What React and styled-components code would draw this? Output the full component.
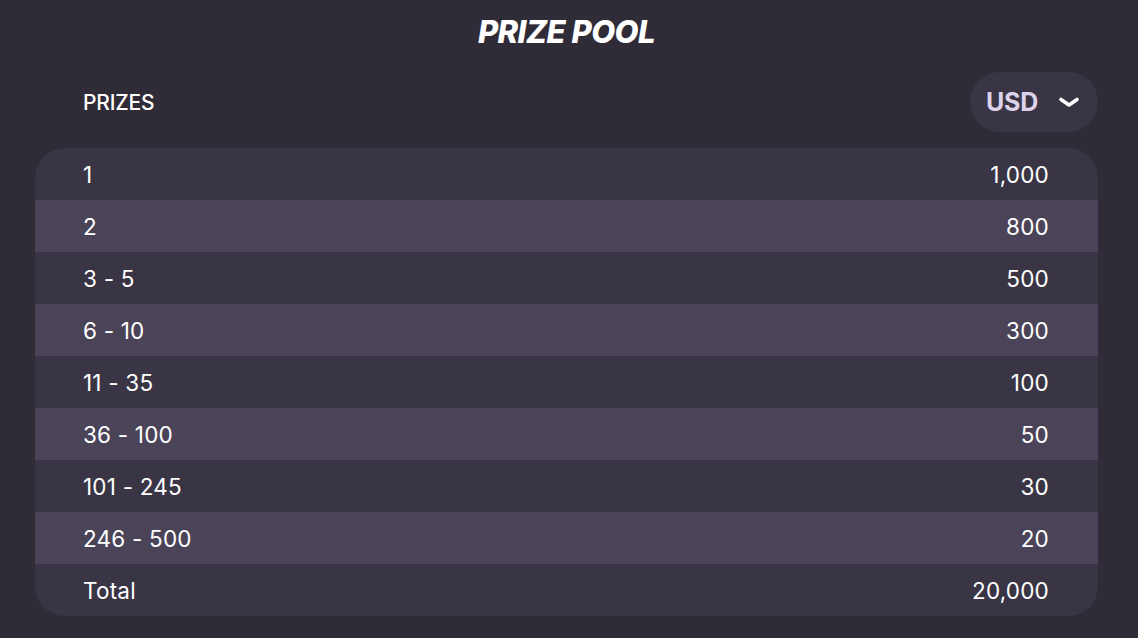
import styled, { createGlobalStyle } from "styled-components";

const prizes = [
  { place: "1", amount: "1,000" },
  { place: "2", amount: "800" },
  { place: "3 - 5", amount: "500" },
  { place: "6 - 10", amount: "300" },
  { place: "11 - 35", amount: "100" },
  { place: "36 - 100", amount: "50" },
  { place: "101 - 245", amount: "30" },
  { place: "246 - 500", amount: "20" },
  { place: "Total", amount: "20,000" },
];

export default function App() {
  return (
    <Page>
      <GlobalStyle />
      <Title>PRIZE POOL</Title>
      <Header>
        <Label>PRIZES</Label>
        <CurrencyButton>
          USD
          <svg width="22" height="12" viewBox="0 0 22 12" fill="none">
            <path
              d="M3 3.5l8 5.5 8-5.5"
              stroke="#fff"
              strokeWidth="3.6"
              strokeLinecap="round"
              strokeLinejoin="round"
            />
          </svg>
        </CurrencyButton>
      </Header>
      <Table>
        {prizes.map((p, i) => (
          <Row key={p.place} $alt={i % 2 === 1}>
            <span>{p.place}</span>
            <span>{p.amount}</span>
          </Row>
        ))}
      </Table>
    </Page>
  );
}

const GlobalStyle = createGlobalStyle`
  body {
    margin: 0;
    background: #2f2b37;
    font-family: "Inter", "Noto Sans", sans-serif;
    color: #fff;
  }
`;

const Page = styled.div`
  width: 1138px;
  height: 638px;
  box-sizing: border-box;
  padding: 14px 40px 0 35px;
  display: flex;
  flex-direction: column;
`;

const Title = styled.h1`
  margin: 0;
  text-align: center;
  font-size: 31px;
  line-height: 36px;
  font-weight: 800;
  font-style: italic;
  letter-spacing: -0.5px;
`;

const Header = styled.div`
  margin-top: 22px;
  height: 60px;
  display: flex;
  align-items: center;
  justify-content: space-between;
  padding-left: 48px;
`;

const Label = styled.div`
  font-size: 21px;
  font-weight: 500;
  letter-spacing: -0.2px;
`;

const CurrencyButton = styled.div`
  height: 60px;
  width: 128px;
  box-sizing: border-box;
  padding: 0 18px 0 16px;
  border-radius: 30px;
  background: #3a3545;
  display: flex;
  align-items: center;
  justify-content: space-between;
  color: #dcd3ea;
  font-size: 25px;
  font-weight: 700;
  letter-spacing: -0.2px;
  svg {
    margin-top: 0;
  }
`;

const Table = styled.div`
  margin-top: 16px;
  border-radius: 30px;
  overflow: hidden;
  display: flex;
  flex-direction: column;
`;

const Row = styled.div`
  height: 52px;
  display: flex;
  align-items: center;
  justify-content: space-between;
  padding: 0 49px 0 48px;
  background: ${(p) => (p.$alt ? "#4b4459" : "#3a3545")};
  font-size: 22.5px;
  font-weight: 400;
  letter-spacing: 0.2px;
`;
